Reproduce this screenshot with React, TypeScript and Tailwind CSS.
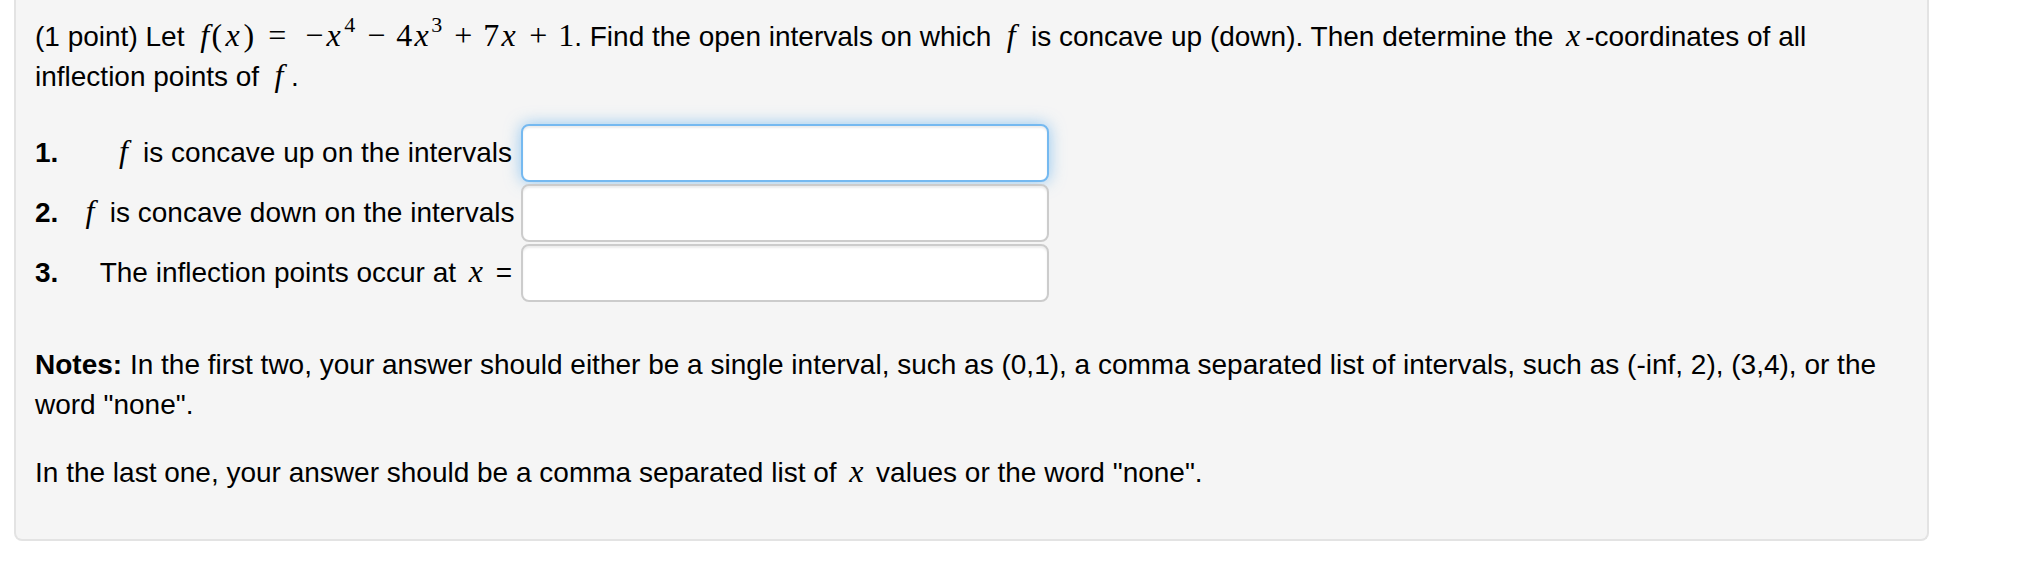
import React from "react";

// TeX-like inline math: glyph boxes get fixed widths so the spacing follows MathJax
const M = ({ children }: { children: React.ReactNode }) => (
  <span className="font-['Liberation_Serif',serif] text-[32px] leading-none whitespace-nowrap">{children}</span>
);
const G = ({ w, it = false, children }: { w: string; it?: boolean; children: React.ReactNode }) => (
  <span className={`inline-block ${w} ${it ? "italic" : ""}`}>{children}</span>
);
const Sup = ({ children }: { children: React.ReactNode }) => (
  <span className="inline-block w-[12px] text-left text-[22px] leading-[14px] align-[14px]">{children}</span>
);
const Rel = ({ children }: { children: React.ReactNode }) => (
  <span className="mx-[9px] inline-block w-[26px] text-center">{children}</span>
);
const Bin = ({ children }: { children: React.ReactNode }) => (
  <span className="mx-[7px] inline-block w-[26px] text-center">{children}</span>
);
// single variable such as f or x in running text
const Var = ({ children }: { children: React.ReactNode }) => (
  <M>
    <G w="w-[24px] text-center" it>
      {children}
    </G>
  </M>
);

const ROWS = [
  {
    n: "1.",
    label: (
      <>
        <Var>f</Var> is concave up on the intervals
      </>
    ),
    focused: true,
  },
  {
    n: "2.",
    label: (
      <>
        <Var>f</Var> is concave down on the intervals
      </>
    ),
    focused: false,
  },
  {
    n: "3.",
    label: (
      <>
        The inflection points occur at <Var>x</Var> =
      </>
    ),
    focused: false,
  },
];

export default function App() {
  return (
    <div className="min-h-[564px] bg-white pl-[14px] font-['Liberation_Sans',Arial,sans-serif] text-[28px] leading-[40px] text-black">
      <div className="w-[1915px] rounded-b-[8px] border-2 border-t-0 border-[#e3e3e3] bg-[#f5f5f5] pt-[17px] pr-[30px] pb-[46px] pl-[19px]">
        {/* problem statement */}
        <p>
          (1 point) Let{" "}
          <M>
            <G w="w-[18px] text-right pr-[1px]" it>
              f
            </G>
            <G w="w-[13px] text-center">(</G>
            <G w="w-[19px] text-center" it>
              x
            </G>
            <G w="w-[13px] text-center">)</G>
            <Rel>=</Rel>
            <G w="w-[24px] text-right">−</G>
            <G w="w-[21px] text-center" it>
              x
            </G>
            <Sup>4</Sup>
            <Bin>−</Bin>
            <G w="w-[16px] text-center">4</G>
            <G w="w-[19px] text-center" it>
              x
            </G>
            <Sup>3</Sup>
            <Bin>+</Bin>
            <G w="w-[16px] text-center">7</G>
            <G w="w-[19px] text-center" it>
              x
            </G>
            <Bin>+</Bin>
            <G w="w-[16px] text-center">1</G>
          </M>
          . Find the open intervals on which <Var>f</Var> is concave up (down). Then determine the{" "}
          <Var>x</Var>-coordinates of all inflection points of <Var>f</Var>.
        </p>

        {/* answer rows */}
        <div className="mt-[27px] grid grid-cols-[43px_443px_528px] items-center gap-y-[2px]">
          {ROWS.map((row) => (
            <React.Fragment key={row.n}>
              <b className="font-bold">{row.n}</b>
              <div className="whitespace-nowrap pr-[9px] text-right">{row.label}</div>
              <input
                type="text"
                className={`h-[58px] w-[528px] rounded-[8px] border-2 bg-white px-[12px] outline-none ${
                  row.focused
                    ? "border-[#75b9f0] shadow-[inset_0_2px_2px_rgba(0,0,0,0.075),0_0_16px_rgba(82,168,236,0.6)]"
                    : "border-[#cccccc] shadow-[inset_0_2px_2px_rgba(0,0,0,0.075)]"
                }`}
              />
            </React.Fragment>
          ))}
        </div>

        {/* notes */}
        <p className="mt-[43px]">
          <b className="font-bold">Notes:</b> In the first two, your answer should either be a single interval, such
          as (0,1), a comma separated list of intervals, such as (-inf, 2), (3,4), or the word "none".
        </p>
        <p className="mt-[28px]">
          In the last one, your answer should be a comma separated list of <Var>x</Var> values or the word "none".
        </p>
      </div>
    </div>
  );
}
